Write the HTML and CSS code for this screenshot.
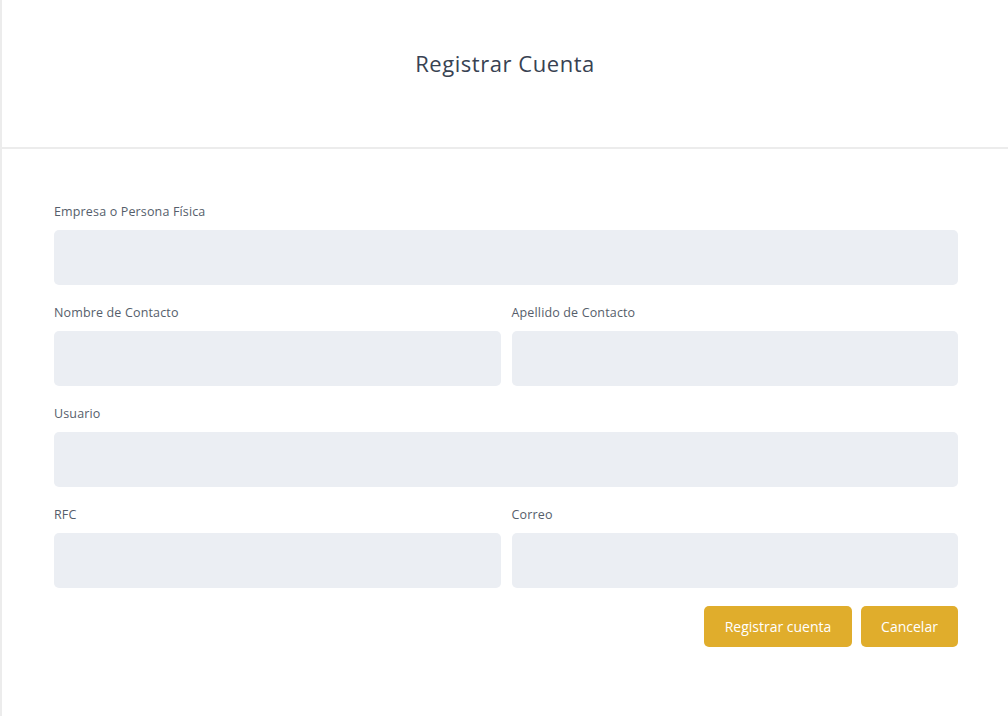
FILE: index.html
```html
<!DOCTYPE html>
<html lang="es">
<head>
<meta charset="utf-8">
<title>Registrar Cuenta</title>
<link rel="stylesheet" href="styles.css">
</head>
<body>
<div class="page">
  <header class="header">
    <h1 class="title">Registrar Cuenta</h1>
  </header>
  <form class="form">
    <div class="row">
      <div class="field">
        <label class="label">Empresa o Persona Física</label>
        <input class="input" type="text">
      </div>
    </div>
    <div class="row two">
      <div class="field">
        <label class="label">Nombre de Contacto</label>
        <input class="input" type="text">
      </div>
      <div class="field">
        <label class="label">Apellido de Contacto</label>
        <input class="input" type="text">
      </div>
    </div>
    <div class="row">
      <div class="field">
        <label class="label">Usuario</label>
        <input class="input" type="text">
      </div>
    </div>
    <div class="row two">
      <div class="field">
        <label class="label">RFC</label>
        <input class="input" type="text">
      </div>
      <div class="field">
        <label class="label">Correo</label>
        <input class="input" type="text">
      </div>
    </div>
    <div class="actions">
      <button type="button" class="btn btn-wide">Registrar cuenta</button>
      <button type="button" class="btn">Cancelar</button>
    </div>
  </form>
</div>
</body>
</html>
```
FILE: styles.css
```css
* { box-sizing: border-box; }
html, body { margin: 0; padding: 0; background: #ffffff; }
body {
  font-family: "Open Sans", "Liberation Sans", sans-serif;
  color: #3b4452;
}
.page {
  min-height: 716px;
  border-left: 2px solid #ececec;
}
.header {
  height: 149px;
  border-bottom: 2px solid #ececec;
  padding-top: 48px;
  text-align: center;
}
.title {
  margin: 0;
  font-size: 22px;
  line-height: 30px;
  font-weight: 400;
  color: #384252;
  letter-spacing: 0.55px;
}
.form {
  padding: 52px 50px 0 52px;
  display: flex;
  flex-direction: column;
  gap: 17px;
}
.row {
  display: grid;
  grid-template-columns: 1fr;
  gap: 11px;
}
.row.two { grid-template-columns: 1fr 1fr; }
.field {
  display: flex;
  flex-direction: column;
  gap: 8px;
}
.label {
  font-size: 12.5px;
  line-height: 20px;
  padding-top: 1px;
  color: #565e6b;
  letter-spacing: 0.15px;
}
.input {
  height: 55px;
  border: none;
  border-radius: 5px;
  background: #ebeef3;
  font: inherit;
  padding: 0 12px;
  outline: none;
}
.actions {
  display: flex;
  justify-content: flex-end;
  gap: 9px;
  margin-top: 1px;
}
.btn {
  height: 41px;
  border: none;
  border-radius: 5px;
  background: #e0ad2c;
  color: #ffffff;
  font-family: inherit;
  font-size: 14px;
  font-weight: 500;
  padding: 0;
  width: 97px;
  white-space: nowrap;
  cursor: pointer;
}
.btn.btn-wide { width: 148px; }
```
